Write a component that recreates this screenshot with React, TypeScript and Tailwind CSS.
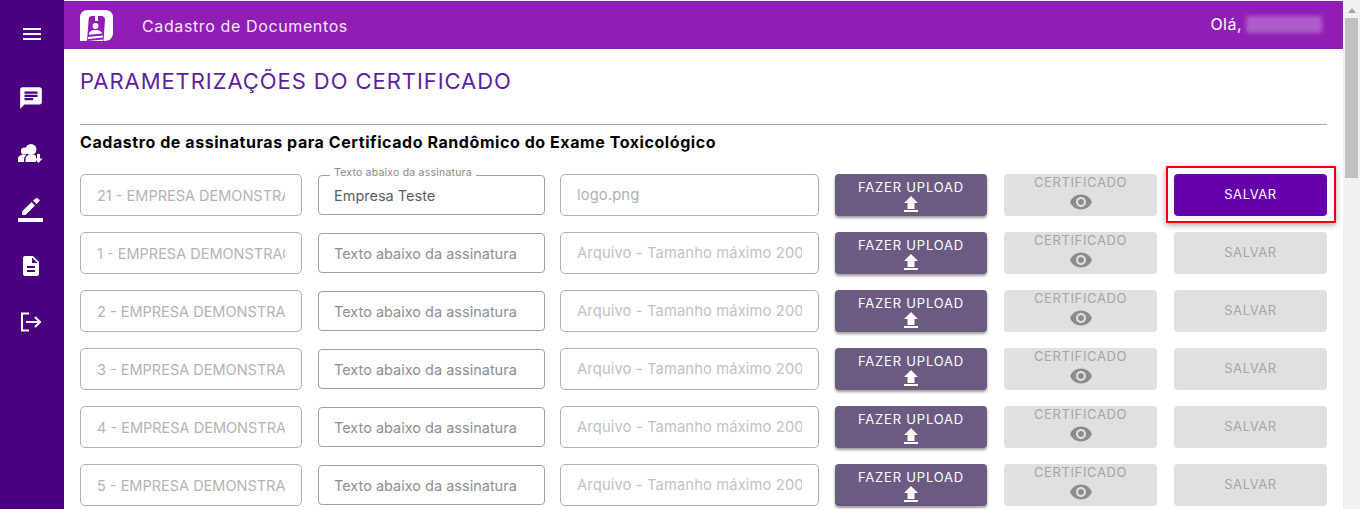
import { MdMenu, MdChat, MdDescription, MdVisibility } from "react-icons/md";

const font = { fontFamily: "Inter, 'Open Sans', sans-serif" };

function Logo() {
  return (
    <svg width="33" height="32" viewBox="0 0 33 32" className="mt-[1px] shrink-0">
      <path
        fill="#fff"
        fillRule="evenodd"
        d="M8 0H25Q33 0 33 8V23Q33 30 25 31H23.500L25 10Q25 6 21 6H12Q9 6 8.700 9L7 31H0V8Q0 0 8 0Z"
      />
      <rect x="15" y="4" width="3" height="7" fill="#fff" />
      <circle cx="15.500" cy="16" r="3" fill="#fff" />
      <path fill="#fff" d="M9 24c0-2.500 3-4 6.500-4s6.500 1.500 6.500 3.500l-13 1.200zM8 27l15-1.500v2L8 29zM8 31l15-1.500V31H8z" />
    </svg>
  );
}

function GroupMic() {
  return (
    <svg width="26" height="22" viewBox="0 0 26 22" fill="#fff">
      <circle cx="13" cy="6.500" r="5.500" />
      <circle cx="6.500" cy="8" r="3.600" />
      <path d="M0 19v-3c0-3 3-4.500 6-4.500 1 0 2 .2 2.500.5-1.500 1-2.500 2.500-2.500 4.500V19zM7.500 19v-3c0-3 3-4.500 6-4.500 2 0 3.500.5 4.500 1.300V19z" />
      <path d="M19 11h3v4.500h2.500L20.500 20 16.500 15.500H19z" />
    </svg>
  );
}

function PencilBar() {
  return (
    <svg width="25" height="24" viewBox="0 0 25 24" fill="#fff">
      <path d="M4 13.500V17h3.500L17 7.500 13.500 4z" />
      <path d="M15 2.500 18.500 6l2.900-2.900a1 1 0 0 0 0-1.400L19.300.3a1 1 0 0 0-1.400 0z" />
      <rect x="0" y="20" width="25" height="4" />
    </svg>
  );
}

function LogoutIcon() {
  return (
    <svg width="22" height="20" viewBox="0 0 22 20" fill="none" stroke="#fff" strokeWidth="2">
      <path d="M9 1.500H2v17h7" />
      <path d="M6 10h14M15 5l5 5-5 5" />
    </svg>
  );
}

function UploadIcon() {
  return (
    <svg width="14" height="16" viewBox="0 0 14 16" fill="#fff" className="mt-[1px]">
      <path d="M7 0l7 7h-3.500v6h-7V7H0z" />
      <rect x="0" y="14" width="14" height="2" />
    </svg>
  );
}

function Upload() {
  return (
    <div className="ml-4 flex h-[42px] w-[152px] shrink-0 flex-col items-center rounded-[4px] bg-[#6b5b83] pt-[5px] text-[13px] leading-[16px] tracking-[0.8px] text-white shadow-[0_2px_3px_rgba(0,0,0,0.4)]">
      <span>FAZER UPLOAD</span>
      <UploadIcon />
    </div>
  );
}

function Certificate() {
  return (
    <div className="ml-[17px] flex h-[42px] w-[153px] shrink-0 flex-col items-center rounded-[4px] bg-[#e0e0e0] text-[13px] leading-[16px] tracking-[0.62px] text-[#a6a6a6]">
      <span>CERTIFICADO</span>
      <MdVisibility size={24} className="text-[#8c8c8c]" />
    </div>
  );
}

function Row({ company, text, file }: { company: string; text?: string; file?: string }) {
  const active = !!text;
  return (
    <div className="flex h-[42px] items-start">
      <input
        readOnly
        value={company}
        className="h-[42px] w-[222px] shrink-0 rounded-[5px] border border-[#b0b0b0] bg-white px-[16px] text-[14.500px] text-[#b4b4b4] outline-none"
      />
      <div className="relative ml-4 shrink-0">
        <input
          readOnly
          value={text ?? ""}
          placeholder="Texto abaixo da assinatura"
          className="mt-px block h-[40px] w-[227px] rounded-[4px] border border-[#a0a0a0] bg-white px-[15px] text-[14.500px] text-[#5e5e5e] outline-none placeholder:text-[#8f8f8f]"
        />
        {active && (
          <span className="absolute -top-[7px] left-[12px] bg-white px-[4px] text-[10.500px] leading-[12px] tracking-[0.02em] text-[#8a8a8a]">
            Texto abaixo da assinatura
          </span>
        )}
      </div>
      <input
        readOnly
        value={file ?? ""}
        placeholder="Arquivo - Tamanho máximo 200kb"
        className="ml-[15px] h-[42px] w-[259px] shrink-0 rounded-[5px] border border-[#b0b0b0] bg-white px-[16px] text-[14.750px] tracking-[0.12px] text-[#b0b0b0] outline-none placeholder:text-[#c2c2c2]"
      />
      <Upload />
      <Certificate />
      <div className="relative ml-[17px] shrink-0">
        <div
          className={`flex h-[42px] w-[153px] items-center justify-center rounded-[4px] text-[13px] tracking-[0.56px] ${active ? "bg-[#6600ad] text-white" : "bg-[#e0e0e0] text-[#a6a6a6]"}`}
        >
          SALVAR
        </div>
        {active && (
          <div className="absolute -bottom-[7px] -left-2 -right-[9px] -top-2 rounded-[1px] border-2 border-[#f00000] shadow-[0_2px_6px_rgba(0,0,0,0.35)]" />
        )}
      </div>
    </div>
  );
}

const rows = [
  { company: "21 - EMPRESA DEMONSTRAÇÃO", text: "Empresa Teste", file: "logo.png" },
  { company: "1 - EMPRESA DEMONSTRAÇÃO" },
  { company: "2 - EMPRESA DEMONSTRAÇÃO" },
  { company: "3 - EMPRESA DEMONSTRAÇÃO" },
  { company: "4 - EMPRESA DEMONSTRAÇÃO" },
  { company: "5 - EMPRESA DEMONSTRAÇÃO" },
];

export default function App() {
  return (
    <div className="flex h-[509px] w-[1360px] overflow-hidden bg-white" style={font}>
      <aside className="flex w-16 shrink-0 flex-col items-center bg-[#4a007f] text-white">
        <MdMenu size={24} className="mt-[22px]" />
        <MdChat size={26} className="mt-[39px] -ml-[2px]" />
        <div className="mt-[32px] -ml-[2px]"><GroupMic /></div>
        <div className="mt-[33px] -ml-[3px]"><PencilBar /></div>
        <MdDescription size={24} className="mt-[32px] -ml-[3px]" />
        <div className="mt-[34px] -ml-[3px]"><LogoutIcon /></div>
      </aside>
      <main className="flex min-w-0 flex-1 flex-col">
        <header className="mt-px flex h-12 shrink-0 items-center bg-[#911eb4] pl-4 pr-[21px] text-white">
          <Logo />
          <span className="ml-[29px] mt-[2px] text-[16px] tracking-[0.62px] text-[#f3e6f8]">Cadastro de Documentos</span>
          <span className="ml-auto -mt-[2px] text-[16px] tracking-[0.48px]">Olá,</span>
          <span className="ml-[4px] -mt-[2px] h-[17px] w-[76px] bg-[#ac5dc7] blur-[2px]" />
        </header>
        <div className="flex flex-col px-4">
          <h1 className="mt-[18px] text-[22px] leading-[28px] tracking-[0.93px] text-[#5f1f9b]">PARAMETRIZAÇÕES DO CERTIFICADO</h1>
          <div className="mt-[29px] h-px bg-[#aaaaaa]" />
          <h2 className="mt-[7px] text-[16px] font-bold leading-[20px] tracking-[0.57px] text-black">
            Cadastro de assinaturas para Certificado Randômico do Exame Toxicológico
          </h2>
          <div className="mt-[22px] flex flex-col gap-4">
            {rows.map((r) => (
              <Row key={r.company} {...r} />
            ))}
          </div>
        </div>
      </main>
      <div className="flex w-[17px] shrink-0 flex-col items-center bg-[#f1f1f1]">
        <svg width="8" height="5" viewBox="0 0 8 5" className="mt-[8px]"><path d="M4 0 8 5H0z" fill="#a3a3a3" /></svg>
        <div className="mt-[5px] h-[160px] w-[13px] bg-[#c1c1c1]" />
      </div>
    </div>
  );
}
